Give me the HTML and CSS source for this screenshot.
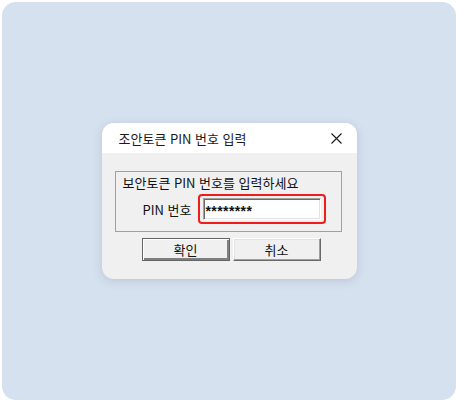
FILE: index.html
```html
<!DOCTYPE html>
<html lang="ko">
<head>
<meta charset="UTF-8" />
<title>보안토큰 PIN 번호 입력</title>
<link rel="stylesheet" href="styles.css">
</head>
<body>

<div class="screen">
  <div class="dialog">
    <!-- Title bar -->
    <div class="titlebar">
      <span class="title">조안토큰 PIN 번호 입력</span>
      <svg class="close" width="11" height="11" viewBox="0 0 11 11">
        <path d="M0.5 0.5 L10.5 10.5 M10.5 0.5 L0.5 10.5" stroke="#1a1a1a" stroke-width="1.1" fill="none" />
      </svg>
    </div>

    <div class="content">
      <div class="groupbox">
        <div class="group-label">보안토큰 PIN 번호를 입력하세요</div>
        <div class="pin-row">
          <span class="pin-label">PIN 번호</span>
          <div class="highlight">
            <div class="pin-input">********</div>
          </div>
        </div>
      </div>

      <div class="buttons">
        <button class="btn default">확인</button>
        <button class="btn">취소</button>
      </div>
    </div>
  </div>
</div>

</body>
</html>
```

FILE: styles.css
```css
html, body {
  margin: 0;
  background: #fff;
  width: 100%;
  height: 100%;
  font-family: 'Noto Sans CJK KR', 'Noto Sans', sans-serif;
  color: #111;
}

.screen {
  margin: 2px;
  width: 454px;
  height: 398px;
  background: #d6e1ef;
  border-radius: 14px;
  display: flex;
  align-items: center;
  justify-content: center;
}

.dialog {
  width: 255px;
  height: 156px;
  background: #f0f0f0;
  border-radius: 12px;
  overflow: hidden;
  box-shadow: 0 2px 10px rgba(60, 80, 110, 0.18);
}

.titlebar {
  height: 30px;
  background: #fff;
  display: flex;
  align-items: center;
  justify-content: space-between;
  padding: 0 15px 0 17px;
  font-size: 13px;
  color: #1a1a1a;
}

.close {
  display: block;
}

.content {
  padding: 18px 15px 0 13px;
}

.groupbox {
  height: 61px;
  border: 1px solid #a0a0a0;
  padding: 3px 0 0 7px;
  box-sizing: border-box;
}

.group-label {
  font-size: 13px;
  line-height: 15px;
}

.pin-row {
  display: flex;
  align-items: center;
  justify-content: flex-end;
  gap: 6px;
  margin-top: 4px;
  padding-right: 15px;
}

.pin-label {
  font-size: 13px;
}

.highlight {
  border: 2px solid #f01c1c;
  border-radius: 4px;
  padding: 2px 3px;
}

.pin-input {
  width: 114px;
  height: 20px;
  background: #fff;
  border: 1px solid;
  border-color: #a0a0a0 #fff #fff #a0a0a0;
  box-shadow: inset 1px 1px #696969, inset -1px -1px #e3e3e3;
  font-family: 'Liberation Sans', sans-serif;
  font-size: 14px;
  font-weight: bold;
  line-height: 24px;
  padding-left: 2px;
  letter-spacing: 0.4px;
}

.buttons {
  display: flex;
  gap: 3px;
  padding: 6px 0 0 27px;
}

.btn {
  width: 88px;
  height: 23px;
  padding: 0;
  background: #f0f0f0;
  font-family: 'Noto Sans CJK KR', sans-serif;
  font-size: 13px;
  color: #111;
  border: 1px solid;
  border-color: #fff #696969 #696969 #fff;
  box-shadow: inset -1px -1px #a0a0a0, inset 1px 1px #e3e3e3;
}

.btn.default {
  border: 1px solid #646464;
  box-shadow: inset 1px 1px #fff, inset -2px -2px #808080;
}
```
